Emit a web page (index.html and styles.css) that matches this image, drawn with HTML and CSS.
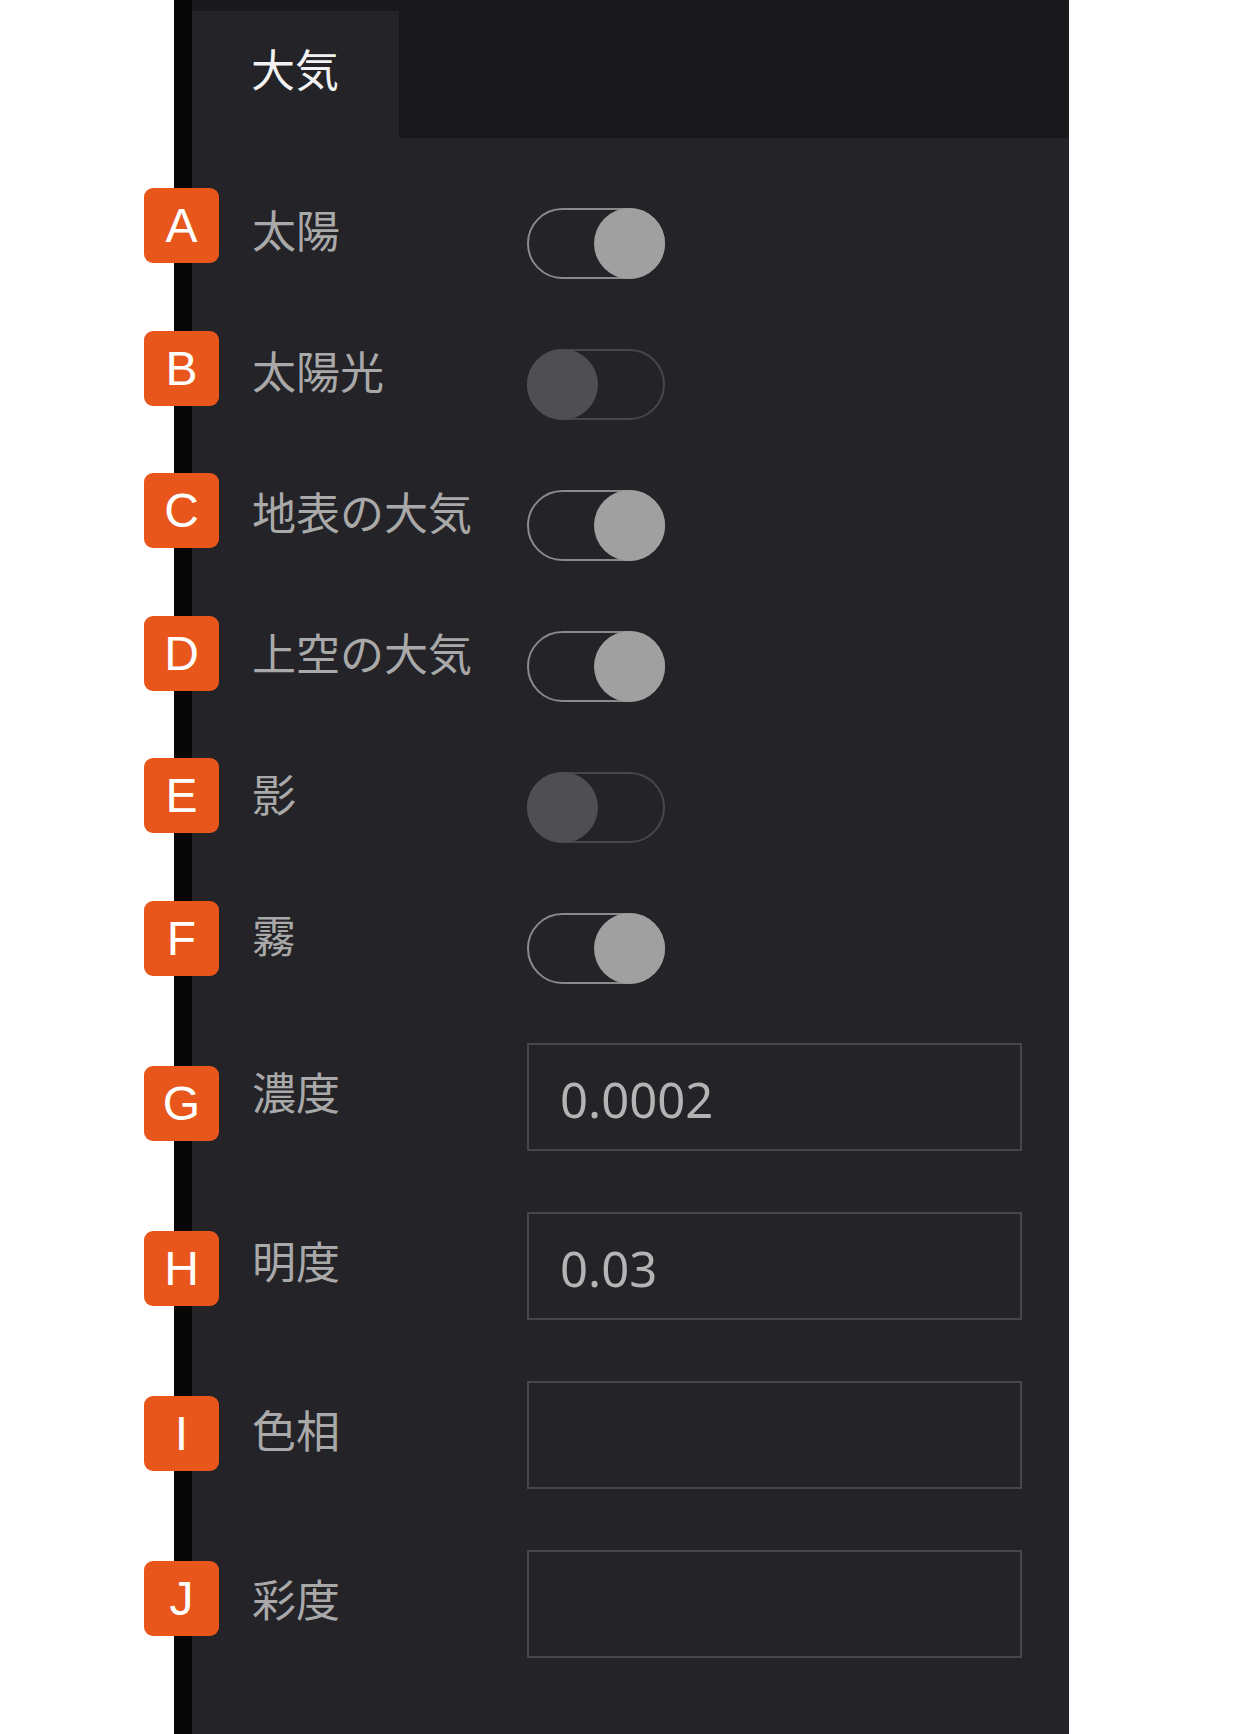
FILE: index.html
```html
<!DOCTYPE html>
<html lang="ja">
<head>
<meta charset="utf-8">
<title>大気</title>
<link rel="stylesheet" href="styles.css">
</head>
<body>
<div class="page">
  <div class="panel">
    <div class="header">
      <div class="tab">大気</div>
    </div>
    <div class="rows">
      <div class="row row-toggle"><span class="label">太陽</span><span class="toggle on"><span class="knob"></span></span></div>
      <div class="row row-toggle"><span class="label">太陽光</span><span class="toggle off"><span class="knob"></span></span></div>
      <div class="row row-toggle"><span class="label">地表の大気</span><span class="toggle on"><span class="knob"></span></span></div>
      <div class="row row-toggle"><span class="label">上空の大気</span><span class="toggle on"><span class="knob"></span></span></div>
      <div class="row row-toggle"><span class="label">影</span><span class="toggle off"><span class="knob"></span></span></div>
      <div class="row row-toggle"><span class="label">霧</span><span class="toggle on"><span class="knob"></span></span></div>
      <div class="row row-input"><span class="label">濃度</span><span class="field">0.0002</span></div>
      <div class="row row-input"><span class="label">明度</span><span class="field">0.03</span></div>
      <div class="row row-input"><span class="label">色相</span><span class="field"></span></div>
      <div class="row row-input"><span class="label">彩度</span><span class="field"></span></div>
    </div>
  </div>
  <div class="badges">
    <span class="badge">A</span>
    <span class="badge">B</span>
    <span class="badge">C</span>
    <span class="badge">D</span>
    <span class="badge">E</span>
    <span class="badge">F</span>
    <span class="badge badge-gap">G</span>
    <span class="badge badge-input">H</span>
    <span class="badge badge-input">I</span>
    <span class="badge badge-input">J</span>
  </div>
</div>
</body>
</html>
```
FILE: styles.css
```css
html, body {
  margin: 0;
  padding: 0;
  background: #ffffff;
}

.page {
  position: relative;
  width: 1243px;
  height: 1734px;
  overflow: hidden;
}

.panel {
  margin-left: 174px;
  width: 877px;
  height: 1734px;
  border-left: 18px solid #060606;
  background: #232328;
  font-family: "Noto Sans CJK JP", "Noto Sans", sans-serif;
}

.header {
  height: 138px;
  box-sizing: border-box;
  padding-top: 11px;
  background: #19191b;
  display: flex;
}

.tab {
  width: 207px;
  height: 127px;
  box-sizing: border-box;
  padding-left: 59px;
  padding-top: 35px;
  background: #232328;
  color: #f2f2f2;
  font-size: 44px;
  line-height: 44px;
}

.rows {
  padding-top: 35px;
  display: flex;
  flex-direction: column;
}

.row {
  display: flex;
  align-items: center;
  padding-left: 60px;
}

.row-toggle {
  height: 141px;
}

.row-input {
  height: 169px;
  box-sizing: border-box;
  padding-top: 24px;
  align-items: flex-start;
}

.label {
  width: 275px;
  flex: none;
  color: #a9a9a9;
  font-size: 44px;
  line-height: 44px;
  white-space: nowrap;
}

.row-toggle .label {
  margin-bottom: 30px;
}

.row-input .label {
  margin-top: 26px;
}

.toggle {
  position: relative;
  width: 138px;
  height: 71px;
  box-sizing: border-box;
  border-radius: 36px;
  border: 2px solid #8a8a8c;
  flex: none;
}

.toggle .knob {
  position: absolute;
  top: -2px;
  width: 71px;
  height: 71px;
  border-radius: 50%;
}

.toggle.on .knob {
  right: -2px;
  background: #a0a0a0;
}

.toggle.off {
  border-color: #48484b;
}

.toggle.off .knob {
  left: -2px;
  background: #4f4f51;
}

.field {
  width: 495px;
  height: 108px;
  box-sizing: border-box;
  border: 2px solid #47474a;
  padding-left: 31px;
  padding-top: 2px;
  color: #b4b4b4;
  font-family: "Noto Sans", "Open Sans", sans-serif;
  font-size: 49px;
  line-height: 104px;
  flex: none;
}

.badges {
  position: absolute;
  left: 144px;
  top: 188px;
  display: flex;
  flex-direction: column;
}

.badge {
  width: 75px;
  height: 75px;
  border-radius: 9px;
  background: #e8561b;
  color: #ffffff;
  font-family: "Liberation Sans", Arial, sans-serif;
  font-size: 48px;
  line-height: 75px;
  text-align: center;
  margin-bottom: 67.6px;
}

.badge-gap {
  margin-top: 22px;
}

.badge-input {
  margin-top: 22.4px;
}
```
